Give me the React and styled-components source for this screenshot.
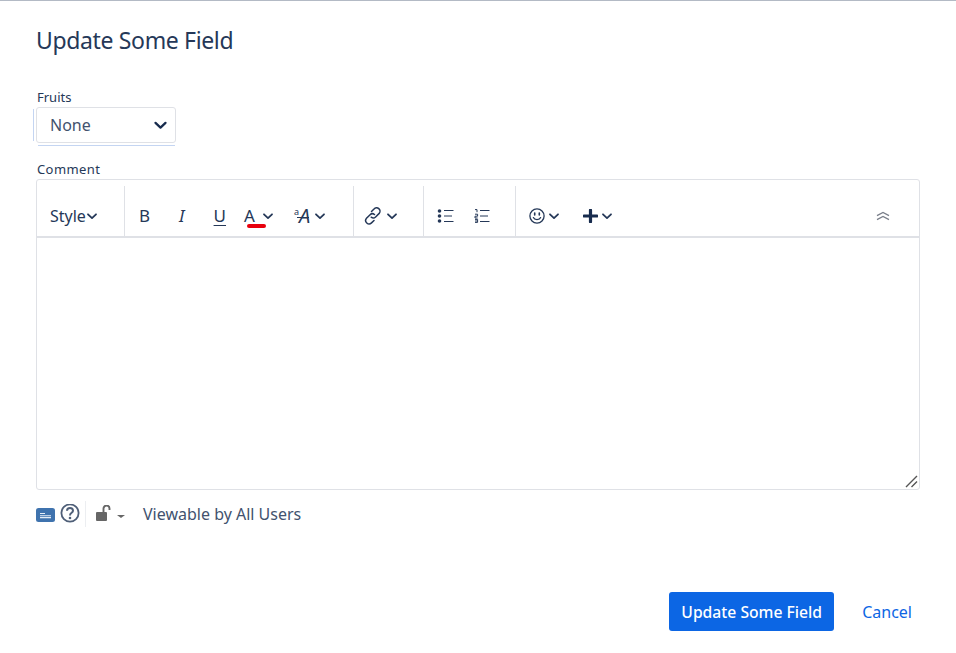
import React from "react";
import styled, { createGlobalStyle } from "styled-components";

const Global = createGlobalStyle`
  html, body { margin: 0; padding: 0; background: #fff; }
  body { font-family: "Noto Sans", "Open Sans", sans-serif; color: #253858; }
`;

const INK = "#253858";

const Chevron = ({ color = INK, width = 12, height = 8 }) => (
  <svg width={width} height={height} viewBox="0 0 12 8">
    <path d="M2 2.3 L6 6.1 L10 2.3" fill="none" stroke={color} strokeWidth="1.8" strokeLinecap="round" strokeLinejoin="round" />
  </svg>
);

const LinkIcon = () => (
  <svg width="20" height="20" viewBox="0 0 20 20" fill="none" stroke={INK} strokeWidth="1.5">
    <path d="M8.5 5.5 L11 3 a3.4 3.4 0 0 1 5.2 4.4 L12.6 11 a3.3 3.3 0 0 1 -4.4 .2" strokeLinecap="round" />
    <path d="M11.5 8.5 a3.3 3.3 0 0 0 -4.4 .2 L3.5 12.3 a3.4 3.4 0 0 0 5 4.6 L11 14.5" strokeLinecap="round" />
  </svg>
);

const BulletIcon = () => (
  <svg width="17" height="14" viewBox="0 0 17 14">
    <circle cx="2.5" cy="2" r="1.8" fill={INK} />
    <circle cx="2.5" cy="7" r="1.8" fill={INK} />
    <circle cx="2.5" cy="12" r="1.8" fill={INK} />
    <path d="M7 1.5 H16.5 M7 7 H15 M7 12.5 H16.5" stroke={INK} strokeWidth="1" />
  </svg>
);

const NumberIcon = () => (
  <svg width="16" height="14" viewBox="0 0 16 14" fill="none" stroke={INK}>
    <path d="M1 .6 H3 V3.2 M1 5.2 H3.6 V7.2 H1 V9 H3.6" strokeWidth="1" />
    <path d="M1 10.4 H3.6 V13.4 H1 M1 12 H3.6" strokeWidth="1" />
    <path d="M6 1.5 H15.5 M6 7 H14 M6 12.5 H15.5" strokeWidth="1" />
  </svg>
);

const SmileIcon = () => (
  <svg width="16" height="16" viewBox="0 0 16 16" fill="none" stroke={INK}>
    <circle cx="8" cy="8" r="7.1" strokeWidth="1.3" />
    <path d="M5.7 5 V7 M10.3 5 V7" strokeWidth="1.6" strokeLinecap="round" />
    <path d="M4.4 9.6 C5.4 12.2 10.6 12.2 11.6 9.6" strokeWidth="1.3" strokeLinecap="round" />
  </svg>
);

const PlusIcon = () => (
  <svg width="15" height="14" viewBox="0 0 15 14">
    <path d="M7.5 1.2 V12.8 M1.2 7 H13.8" stroke="#172B4D" strokeWidth="3.2" strokeLinecap="round" />
  </svg>
);

const CollapseIcon = () => (
  <svg width="14" height="10" viewBox="0 0 14 10" fill="none" stroke="#7a7f8a" strokeWidth="1.3">
    <path d="M1 4.6 L7 1.4 L13 4.6 M1 8.6 L7 5.4 L13 8.6" />
  </svg>
);

const ResizeIcon = () => (
  <svg width="13" height="13" viewBox="0 0 13 13" stroke="#555" strokeWidth="1.4">
    <path d="M1 12 L12 1 M6.5 12 L12 6.5" />
  </svg>
);

const FolderIcon = () => (
  <svg width="19" height="18" viewBox="0 0 19 18">
    <rect width="19" height="14" y="3" rx="2.5" fill="#3f73ae" />
    <path d="M4 8.5 H9 M4 10.8 H15 M4 12.6 H15" stroke="#e6eef7" strokeWidth="1.1" />
  </svg>
);

const HelpIcon = () => (
  <svg width="20" height="20" viewBox="0 0 20 20" fill="none">
    <circle cx="10" cy="9" r="8.6" stroke="#4f5f78" strokeWidth="1.8" />
    <path d="M7 6.8 C7 3.2 13 3.2 13 6.8 C13 9 10 8.6 10 11.4" stroke="#4f5f78" strokeWidth="2" />
    <circle cx="10" cy="14" r="1.3" fill="#4f5f78" />
  </svg>
);

const LockIcon = () => (
  <svg width="16" height="18" viewBox="0 0 16 18">
    <rect x="0" y="7" width="11" height="9" rx="1" fill="#666" />
    <path d="M7.5 7 V3.6 a3 3 0 0 1 6 0 V5" fill="none" stroke="#666" strokeWidth="1.9" />
  </svg>
);

const Page = styled.div`
  width: 956px;
  height: 653px;
  box-sizing: border-box;
  position: relative;
  overflow: hidden;
  border-top: 1px solid #b3bac5;
  padding: 24px 36px 0 36px;
`;

const ScrollMark = styled.div`
  position: absolute;
  top: -1px;
  left: 797px;
  width: 23px;
  height: 1px;
  background: #7a8494;
`;

const Title = styled.h2`
  margin: 0;
  font-size: 23px;
  letter-spacing: -0.35px;
  font-weight: 400;
  line-height: 30px;
  color: ${INK};
`;

const Label = styled.label`
  display: block;
  margin: ${(p) => p.$top}px 0 0 1px;
  font-size: 13px;
  line-height: 18px;
  letter-spacing: ${(p) => p.$spacing ?? 0}px;
  color: ${INK};
`;

const SelectWrap = styled.div`
  position: relative;
  width: 140px;
  height: 36px;
  margin: 1px 0 0 0;
`;

const SelectBox = styled.div`
  box-sizing: border-box;
  height: 36px;
  display: flex;
  align-items: center;
  justify-content: space-between;
  padding: 0 7px 1px 13px;
  border: 1px solid #dfe1e6;
  border-radius: 3px;
  font-size: 16px;
  color: #42526e;
`;

const FocusLeft = styled.div`
  position: absolute;
  left: -3px;
  top: 2px;
  width: 1px;
  height: 32px;
  background: #c4d5f2;
`;

const FocusBottom = styled.div`
  position: absolute;
  left: 2px;
  right: 1px;
  bottom: -3px;
  height: 1px;
  background: #c4d5f2;
`;

const Editor = styled.div`
  box-sizing: border-box;
  width: 884px;
  height: 311px;
  margin-top: 1px;
  position: relative;
  border: 1px solid #dfe1e6;
  border-radius: 3px;
`;

const Toolbar = styled.div`
  box-sizing: border-box;
  height: 58px;
  padding-top: 6px;
  display: flex;
  border-bottom: 2px solid #dfe1e6;
`;

const Group = styled.div`
  box-sizing: border-box;
  width: ${(p) => p.$width}px;
  padding-left: ${(p) => p.$pad}px;
  display: flex;
  align-items: center;
  padding-top: 10px;
  height: 50px;
  border-right: ${(p) => (p.$last ? "none" : "1px solid #dfe1e6")};
  flex: ${(p) => (p.$last ? 1 : "none")};
`;

const Tool = styled.div`
  display: flex;
  align-items: center;
  gap: ${(p) => p.$gap ?? 4}px;
  margin-left: ${(p) => p.$left ?? 0}px;
`;

const ToolText = styled.span`
  font-size: ${(p) => p.$size ?? 17}px;
  line-height: 20px;
  color: ${INK};
  font-weight: 400;
  font-style: ${(p) => (p.$italic ? "italic" : "normal")};
  text-decoration: ${(p) => (p.$underline ? "underline" : "none")};
  text-underline-offset: 3px;
  text-decoration-thickness: 1px;
`;

const Swatch = styled.span`
  position: relative;
  display: inline-block;
  &::after {
    content: "";
    position: absolute;
    left: 3px;
    bottom: -1px;
    width: 19px;
    height: 4px;
    border-radius: 2px;
    background: #e8000d;
  }
`;

const SizeLetter = styled.span`
  position: relative;
  display: inline-flex;
  align-items: flex-start;
  font-size: 20px;
  font-style: italic;
  line-height: 20px;
  color: ${INK};
  &::after {
    content: "";
    position: absolute;
    left: 3px;
    right: 1px;
    top: 11px;
    height: 1px;
    background: ${INK};
  }
`;

const SizeSup = styled.span`
  font-size: 9px;
  line-height: 11px;
  font-style: normal;
`;

const Collapse = styled.div`
  margin-left: auto;
  margin-right: 29px;
  display: flex;
`;

const Grip = styled.div`
  position: absolute;
  right: 1px;
  bottom: 1px;
  display: flex;
`;

const Security = styled.div`
  display: flex;
  align-items: center;
  height: 26px;
  margin-top: 11px;
`;

const Divider = styled.div`
  width: 1px;
  height: 26px;
  background: #eceef1;
  margin: 0 10px 0 5px;
`;

const Caret = styled.span`
  width: 0;
  height: 0;
  margin: 4px 0 0 5px;
  border-left: 4px solid transparent;
  border-right: 4px solid transparent;
  border-top: 3px solid #666;
`;

const SecurityText = styled.span`
  font-size: 16px;
  color: #42526e;
  margin-left: 18px;
`;

const Actions = styled.div`
  display: flex;
  justify-content: flex-end;
  align-items: center;
  width: 884px;
  margin-top: 65px;
`;

const PrimaryButton = styled.button`
  box-sizing: border-box;
  width: 165px;
  height: 39px;
  border: 0;
  border-radius: 3px;
  background: #0c66e4;
  color: #fff;
  font: 500 15.7px "Noto Sans", sans-serif;
  padding: 0;
`;

const CancelLink = styled.a`
  margin: 0 8px 0 28px;
  font-size: 16px;
  color: #0c66e4;
`;

export default function App() {
  return (
    <>
      <Global />
      <Page>
        <ScrollMark />
        <Title>Update Some Field</Title>
        <Label $top={33}>Fruits</Label>
        <SelectWrap>
          <FocusLeft />
          <SelectBox>
            None
            <Chevron color="#172B4D" width={15} height={10} />
          </SelectBox>
          <FocusBottom />
        </SelectWrap>
        <Label $top={17} $spacing={0.4}>Comment</Label>
        <Editor>
          <Toolbar>
            <Group $width={88} $pad={13}>
              <Tool $gap={0}>
                <ToolText $size={16}>Style</ToolText>
                <Chevron />
              </Tool>
            </Group>
            <Group $width={229} $pad={14}>
              <Tool><ToolText>B</ToolText></Tool>
              <Tool $left={29}><ToolText $italic>I</ToolText></Tool>
              <Tool $left={29}><ToolText $underline>U</ToolText></Tool>
              <Tool $left={18} $gap={7}>
                <Swatch><ToolText>A</ToolText></Swatch>
                <Chevron />
              </Tool>
              <Tool $left={20} $gap={4}>
                <SizeLetter><SizeSup>a</SizeSup>A</SizeLetter>
                <Chevron />
              </Tool>
            </Group>
            <Group $width={70} $pad={9}>
              <Tool $gap={3}>
                <LinkIcon />
                <Chevron />
              </Tool>
            </Group>
            <Group $width={92} $pad={13}>
              <BulletIcon />
              <Tool $left={20}><NumberIcon /></Tool>
            </Group>
            <Group $last $pad={13}>
              <Tool $gap={3}>
                <SmileIcon />
                <Chevron />
              </Tool>
              <Tool $left={23} $gap={3}>
                <PlusIcon />
                <Chevron />
              </Tool>
              <Collapse><CollapseIcon /></Collapse>
            </Group>
          </Toolbar>
          <Grip><ResizeIcon /></Grip>
        </Editor>
        <Security>
          <FolderIcon />
          <Tool $left={5}><HelpIcon /></Tool>
          <Divider />
          <LockIcon />
          <Caret />
          <SecurityText>Viewable by All Users</SecurityText>
        </Security>
        <Actions>
          <PrimaryButton>Update Some Field</PrimaryButton>
          <CancelLink>Cancel</CancelLink>
        </Actions>
      </Page>
    </>
  );
}
